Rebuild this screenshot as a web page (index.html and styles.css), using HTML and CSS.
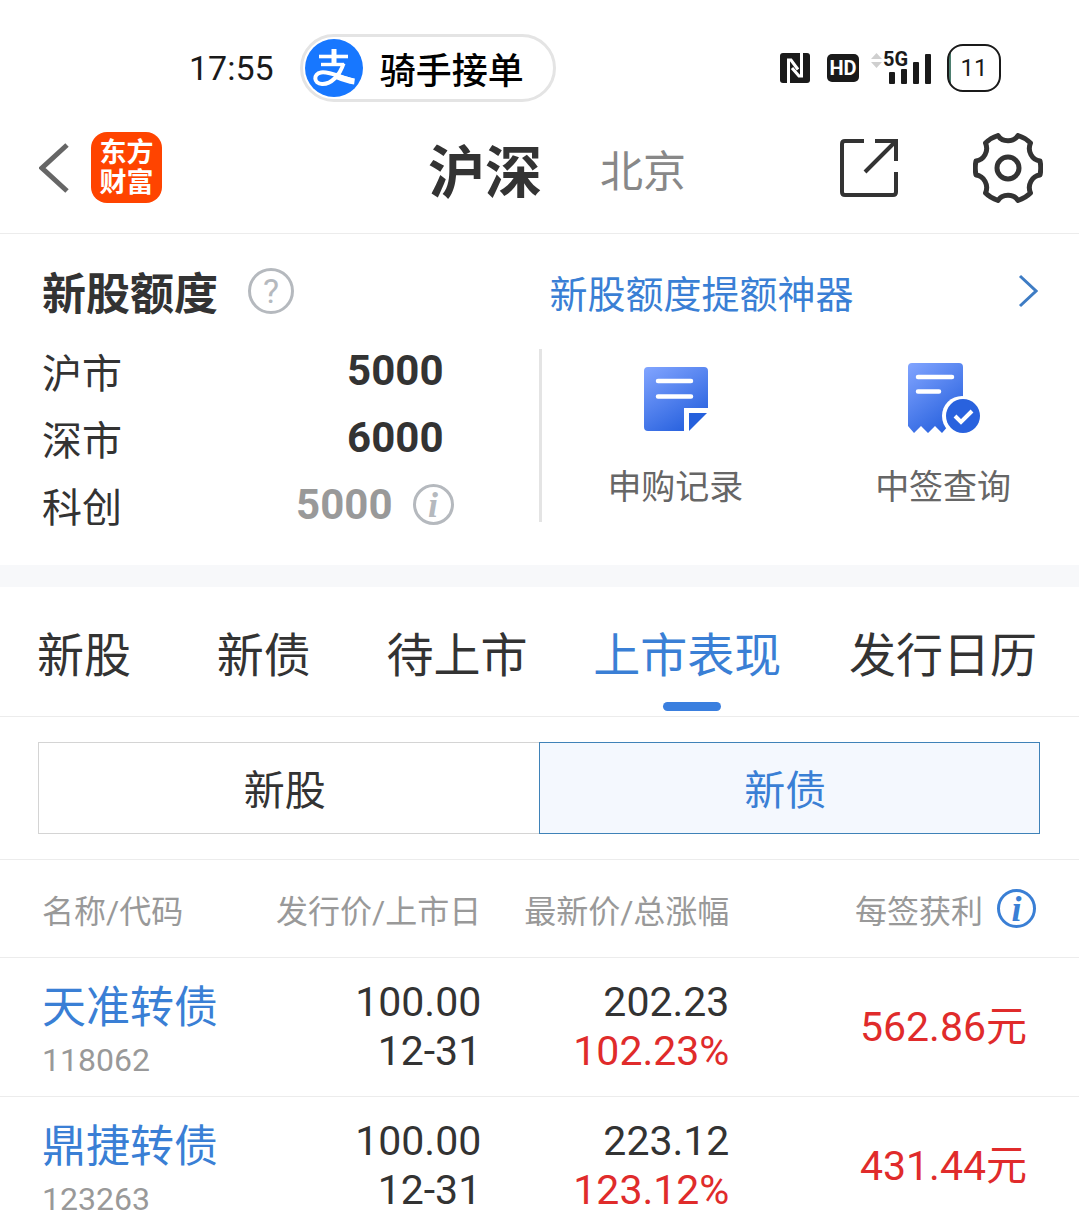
FILE: index.html
```html
<!DOCTYPE html>
<html lang="zh-CN">
<head>
    <meta charset="UTF-8">
    <meta name="viewport" content="width=device-width, initial-scale=1.0">
    <title>新股申购</title>
    <link rel="stylesheet" href="styles.css">
</head>
<body>
    <div class="status-bar">
        <span class="clock">17:55</span>
        <div class="live-pill">
            <svg class="pay-logo" viewBox="0 0 58 58" aria-hidden="true">
                <circle cx="29" cy="29" r="29" fill="#1777ff"/>
                <g fill="none" stroke="#fff">
                    <path d="M14 17.500H43" stroke-width="3.600"/>
                    <path d="M29 10V26" stroke-width="5"/>
                    <path d="M16 25.500H39" stroke-width="3.400"/>
                    <path d="M38.500 24.500C35 36 26 45.500 17 45C8.500 44.500 8 35 16 33.500C24 32 34 38 48 41.500" stroke-width="4"/>
                    <path d="M30 36.500C37 39.500 42 41.500 49.500 42.500" stroke-width="6"/>
                </g>
            </svg>
            <span>骑手接单</span>
        </div>
        <div class="status-icons">
            <svg class="nfc" viewBox="0 0 30 30" aria-hidden="true">
                <rect width="30" height="30" rx="3" fill="#1a1a1a"/>
                <g fill="none" stroke="#fff" stroke-width="3">
                    <path d="M8.500 30V7H11L18 16.500"/>
                    <path d="M21.500 0V23H19L12 15"/>
                </g>
            </svg>
            <svg class="hd" viewBox="0 0 32 28" aria-hidden="true">
                <rect width="32" height="28" rx="5" fill="#1a1a1a"/>
                <text x="16" y="21" text-anchor="middle" class="hd-text">HD</text>
            </svg>
            <svg class="signal" viewBox="0 -6 62 48" aria-hidden="true">
                <path d="M0 9L5.500 3L11 9ZM0 12H11L5.500 18Z" fill="#cfcfcf"/>
                <text x="12" y="16" class="net-text">5G</text>
                <g fill="#1a1a1a">
                    <rect x="18" y="22" width="6" height="12" rx="1"/>
                    <rect x="30" y="19" width="6" height="15" rx="1"/>
                    <rect x="42" y="12" width="6" height="22" rx="1"/>
                    <rect x="54" y="4" width="6" height="30" rx="1"/>
                </g>
            </svg>
            <span class="battery">11</span>
        </div>
    </div>

    <header class="top-nav">
        <div class="nav-left">
            <button type="button" class="icon-btn" aria-label="返回">
                <svg class="back" viewBox="0 0 30 50">
                    <path d="M28 2L3 25L28 48" fill="none" stroke="#666" stroke-width="5"/>
                </svg>
            </button>
            <a href="#" class="brand">东方<br>财富</a>
        </div>
        <nav class="markets">
            <a href="#" class="market active">沪深</a>
            <a href="#" class="market">北京</a>
        </nav>
        <div class="nav-right">
            <button type="button" class="icon-btn" aria-label="分享">
                <svg class="share" viewBox="0 0 58 58">
                    <g fill="none" stroke="#333" stroke-width="4">
                        <path d="M24 2H5Q2 2 2 5V53Q2 56 5 56H53Q56 56 56 53V33"/>
                        <path d="M35 2H56V22M55 3L25 33"/>
                    </g>
                </svg>
            </button>
            <button type="button" class="icon-btn" aria-label="设置">
                <svg class="gear" viewBox="0 0 70 70">
                    <g fill="none" stroke="#333" stroke-width="5" stroke-linejoin="round">
                        <path d="M25 2.500C29 9.500 41 9.500 45 2.500Q52.500 5 57.500 10C54 18 59 27 67 28Q68.500 35 67 42C59 43 54 52 57.500 60Q52.500 65 45 67.500C41 60.500 29 60.500 25 67.500Q17.500 65 12.500 60C16 52 11 43 3 42Q1.500 35 3 28C11 27 16 18 12.500 10Q17.500 5 25 2.500Z"/>
                        <circle cx="35" cy="35" r="11"/>
                    </g>
                </svg>
            </button>
        </div>
    </header>

    <main>
        <section class="quota">
            <div class="quota-title">
                <h2>新股额度</h2>
                <button type="button" class="help" aria-label="额度说明">?</button>
            </div>
            <a href="#" class="boost">
                <span>新股额度提额神器</span>
                <svg class="arrow" viewBox="0 0 20 34" aria-hidden="true">
                    <path d="M2 2L18 17L2 32" fill="none" stroke="#3e7cc4" stroke-width="3"/>
                </svg>
            </a>
            <dl class="quota-list">
                <div class="quota-row">
                    <dt>沪市</dt>
                    <dd>5000</dd>
                </div>
                <div class="quota-row">
                    <dt>深市</dt>
                    <dd>6000</dd>
                </div>
                <div class="quota-row muted">
                    <dt>科创</dt>
                    <dd>5000</dd>
                    <dd><button type="button" class="info" aria-label="科创额度说明">i</button></dd>
                </div>
            </dl>
            <div class="actions">
                <a href="#" class="action">
                    <svg viewBox="0 0 80 80" aria-hidden="true">
                        <defs>
                            <linearGradient id="doc" x1="0" y1="0" x2="0.6" y2="1">
                                <stop offset="0" stop-color="#82a5ff"/>
                                <stop offset="1" stop-color="#2a63df"/>
                            </linearGradient>
                        </defs>
                        <path d="M13 8H69Q73 8 73 12V49H49V72H13Q9 72 9 68V12Q9 8 13 8Z" fill="url(#doc)"/>
                        <path d="M54 54H72L54 72Z" fill="#2560dc"/>
                        <path d="M23 22H56M23 37.500H56" stroke="#fff" stroke-width="4.500" stroke-linecap="round"/>
                    </svg>
                    <span>申购记录</span>
                </a>
                <a href="#" class="action">
                    <svg viewBox="0 0 80 80" aria-hidden="true">
                        <path d="M9 4H56Q60 4 60 8V70L46 66L39 74L32 67L25 74L18 67L11 74L5 67V8Q5 4 9 4Z" fill="url(#doc)"/>
                        <circle cx="59" cy="57" r="20" fill="#fff"/>
                        <circle cx="60" cy="57" r="17" fill="#2962de"/>
                        <path d="M15 18H49M15 32.500H36" stroke="#fff" stroke-width="4.500" stroke-linecap="round"/>
                        <path d="M52 57L58 63L69 52" fill="none" stroke="#fff" stroke-width="4"/>
                    </svg>
                    <span>中签查询</span>
                </a>
            </div>
        </section>

        <nav class="tabs">
            <a href="#" class="tab">新股</a>
            <a href="#" class="tab">新债</a>
            <a href="#" class="tab">待上市</a>
            <a href="#" class="tab active">上市表现</a>
            <a href="#" class="tab">发行日历</a>
        </nav>

        <div class="segment">
            <button type="button" class="segment-btn">新股</button>
            <button type="button" class="segment-btn active">新债</button>
        </div>

        <table class="bonds">
            <colgroup>
                <col class="col-name">
                <col class="col-issue">
                <col class="col-latest">
                <col>
            </colgroup>
            <thead>
                <tr>
                    <th>名称/代码</th>
                    <th>发行价/上市日</th>
                    <th>最新价/总涨幅</th>
                    <th>
                        <div class="profit-head">每签获利 <button type="button" class="info blue" aria-label="每签获利说明">i</button></div>
                    </th>
                </tr>
            </thead>
            <tbody>
                <tr>
                    <td><a href="#" class="bond-name">天准转债</a><span class="bond-code">118062</span></td>
                    <td>100.00<br>12-31</td>
                    <td>202.23<br><span class="up">102.23%</span></td>
                    <td class="profit up">562.86元</td>
                </tr>
                <tr>
                    <td><a href="#" class="bond-name">鼎捷转债</a><span class="bond-code">123263</span></td>
                    <td>100.00<br>12-31</td>
                    <td>223.12<br><span class="up">123.12%</span></td>
                    <td class="profit up">431.44元</td>
                </tr>
            </tbody>
        </table>
    </main>
</body>
</html>
```
FILE: styles.css
```css
* {
    margin: 0;
    padding: 0;
    box-sizing: border-box;
}

body {
    height: 100vh;
    display: flex;
    flex-direction: column;
    overflow: hidden;
    font-family: Roboto, 'Noto Sans CJK SC', sans-serif;
    background: #fff;
    color: #333;
}

a {
    color: inherit;
    text-decoration: none;
}

button {
    border: none;
    background: none;
    color: inherit;
    font-family: inherit;
    cursor: pointer;
}

svg {
    display: block;
}

/* status bar */
.status-bar {
    flex: none;
    display: flex;
    align-items: center;
    height: 102px;
    padding: 33px 78px 0 189px;
    color: #1a1a1a;
}

.clock {
    font-size: 34px;
}

.live-pill {
    display: flex;
    align-items: center;
    gap: 17px;
    height: 68px;
    margin-left: 26px;
    padding: 0 29px 0 2px;
    border: 3px solid #e4e4e4;
    border-radius: 34px;
    font-size: 36px;
    font-weight: 500;
    color: #000;
}

.pay-logo {
    width: 58px;
    height: 58px;
}

.status-icons {
    display: flex;
    align-items: center;
    margin-left: auto;
}

.nfc {
    width: 30px;
    height: 30px;
    margin-right: 17px;
}

.hd {
    width: 32px;
    height: 28px;
    margin-right: 12px;
}

.hd-text {
    font-size: 20px;
    font-weight: 700;
    fill: #fff;
}

.signal {
    width: 62px;
    height: 48px;
    margin-right: 14px;
}

.net-text {
    font-size: 20px;
    font-weight: 700;
    fill: #1a1a1a;
}

.battery {
    width: 54px;
    height: 48px;
    border: 2px solid #1a1a1a;
    border-radius: 16px;
    background: linear-gradient(90deg, #4e7f70 2px, #fff 2px);
    font-size: 24px;
    line-height: 44px;
    text-align: center;
}

/* top navigation */
.top-nav {
    flex: none;
    display: grid;
    grid-template-columns: 1fr auto 1fr;
    align-items: center;
    height: 132px;
    padding: 0 36px 0 39px;
    border-bottom: 1px solid #ececec;
}

.nav-left {
    display: flex;
    align-items: center;
    gap: 22px;
}

.back {
    width: 30px;
    height: 50px;
}

.brand {
    width: 71px;
    height: 71px;
    padding-top: 6px;
    border-radius: 16px;
    background: #ff4400;
    color: #fff;
    font-size: 27px;
    font-weight: 700;
    line-height: 30px;
    text-align: center;
}

.markets {
    display: flex;
    align-items: center;
    gap: 58px;
    padding-left: 32px;
}

.market {
    font-size: 43px;
    color: #888;
}

.market.active {
    font-size: 57px;
    font-weight: 700;
    color: #333;
}

.nav-right {
    display: flex;
    align-items: center;
    justify-content: flex-end;
    gap: 75px;
}

.share {
    width: 58px;
    height: 58px;
}

.gear {
    width: 70px;
    height: 70px;
}

main {
    flex: 1;
    overflow-y: auto;
    scrollbar-width: none;
}

/* quota */
.quota {
    display: grid;
    grid-template-columns: 1fr 1fr;
    row-gap: 3px;
    padding: 14px 0 27px;
    border-bottom: 22px solid #f7f8fa;
}

.quota-title {
    display: flex;
    align-items: center;
    gap: 30px;
    height: 86px;
    padding-left: 42px;
}

.quota-title h2 {
    font-size: 44px;
    font-weight: 700;
}

.help {
    width: 46px;
    height: 46px;
    border: 3px solid #b5b9be;
    border-radius: 50%;
    color: #b5b9be;
    font-size: 34px;
    line-height: 40px;
}

.boost {
    display: flex;
    align-items: center;
    justify-content: space-between;
    padding: 0 41px 0 10px;
    color: #3a7fd5;
    font-size: 38px;
}

.arrow {
    width: 20px;
    height: 34px;
}

.quota-list {
    padding: 0 86px 0 42px;
}

.quota-row {
    display: flex;
    align-items: center;
    height: 67px;
    padding-right: 10px;
    font-size: 40px;
}

.quota-row dt {
    flex: 1;
}

.quota-row dd {
    font-size: 42px;
    font-weight: 700;
}

.quota-row.muted {
    gap: 20px;
    padding-right: 0;
}

.quota-row.muted dd {
    color: #999;
}

.info {
    display: block;
    width: 41px;
    height: 41px;
    border: 3px solid #b5b9be;
    border-radius: 50%;
    color: #b5b9be;
    font-family: 'Liberation Serif', serif;
    font-size: 36px;
    font-style: italic;
    font-weight: 700;
    line-height: 34px;
}

.info.blue {
    width: 39px;
    height: 39px;
    border-color: #3a7fd5;
    color: #3a7fd5;
    line-height: 32px;
}

.actions {
    display: grid;
    grid-template-columns: 1fr 1fr;
    margin: 12px 0 16px -1px;
    padding-right: 2px;
    border-left: 3px solid #e4e4e4;
}

.action {
    display: flex;
    flex-direction: column;
    align-items: center;
    gap: 23px;
    padding-top: 10px;
    color: #666;
    font-size: 34px;
    line-height: 50px;
}

.action svg {
    width: 80px;
    height: 80px;
}

/* tabs */
.tabs {
    display: grid;
    grid-template-columns: 180fr 170fr 207fr 256fr 187fr;
    justify-items: start;
    height: 130px;
    padding: 0 42px 0 37px;
    border-bottom: 1px solid #ececec;
    font-size: 47px;
    line-height: 138px;
    white-space: nowrap;
}

.tab {
    position: relative;
}

.tab.active {
    color: #3a7fd5;
}

.tab.active::after {
    content: '';
    position: absolute;
    left: 50%;
    bottom: 14px;
    width: 58px;
    height: 9px;
    margin-left: -24px;
    border-radius: 5px;
    background: #3a7fdf;
}

/* stock / bond switch */
.segment {
    display: flex;
    padding: 25px 39px 25px 38px;
    border-bottom: 1px solid #ececec;
}

.segment-btn {
    flex: 1;
    height: 92px;
    padding: 0 8px 2px 0;
    border: 1px solid #d4d4d4;
    border-right: none;
    font-size: 41px;
}

.segment-btn.active {
    border: 1px solid #3f82b8;
    background: #f4f8fe;
    color: #3a7fd5;
}

/* bond table */
.bonds {
    width: 100%;
    table-layout: fixed;
    border-collapse: separate;
    border-spacing: 0;
}

.col-name {
    width: 23%;
}

.col-issue {
    width: 21.6%;
}

.col-latest {
    width: 23%;
}

.bonds th {
    height: 98px;
    border-bottom: 1px solid #ececec;
    color: #999;
    font-size: 32px;
    font-weight: 400;
    text-align: right;
    white-space: nowrap;
}

.bonds td {
    padding: 20px 0 14px;
    border-bottom: 1px solid #ececec;
    font-size: 41px;
    line-height: 49px;
    text-align: right;
    vertical-align: top;
}

.bonds th:first-child,
.bonds td:first-child {
    padding-left: 42px;
    text-align: left;
}

.profit-head {
    display: flex;
    align-items: center;
    justify-content: flex-end;
    gap: 14px;
    padding-right: 43px;
}

.bond-name,
.bond-code {
    display: block;
}

.bond-name {
    color: #3a7fd5;
    font-size: 44px;
    line-height: 60px;
}

.bond-code {
    color: #999;
    font-size: 32px;
    line-height: 44px;
}

.bonds .profit {
    padding: 0 52px 0 0;
    vertical-align: middle;
}

.up {
    color: #e02b2b;
}
```
